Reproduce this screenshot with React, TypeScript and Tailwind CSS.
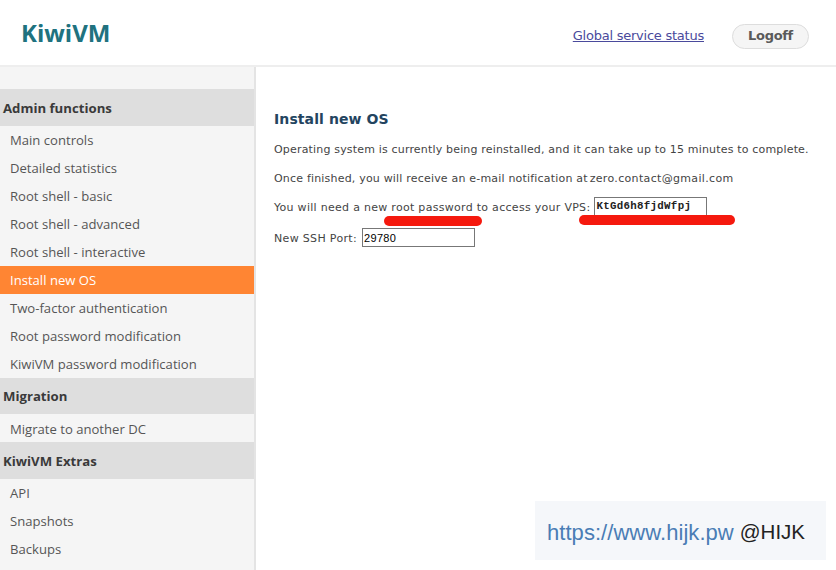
function Section({ title }: { title: string }) {
  return (
    <div className="h-[36.5px] flex items-center pl-[3px] pt-[3px] bg-[#dedede] text-[13.2px] font-bold text-[#3a3a3a] font-['Open_Sans',sans-serif]">
      {title}
    </div>
  );
}

function Item({ label, active }: { label: string; active?: boolean }) {
  return (
    <div
      className={
        "h-7 flex items-center pl-[10px] pt-[3px] text-[13.1px] font-['Open_Sans',sans-serif] " +
        (active ? "bg-[#ff8533] text-white" : "text-[#555555]")
      }
    >
      {label}
    </div>
  );
}

export default function App() {
  return (
    <div className="relative w-[836px] h-[570px] overflow-hidden bg-white">
      <header className="h-[67px] flex items-center justify-between border-b-2 border-[#eeeeee] pl-[21px] pr-[27px]">
        <div className="text-[24px] leading-none font-bold text-[#20727f] font-['Open_Sans',sans-serif]">
          KiwiVM
        </div>
        <div className="flex items-center gap-[28px] pt-[7px]">
          <a className="text-[13px] underline text-[#4a4a9c] font-['DejaVu_Sans',sans-serif] tracking-[-0.24px]">
            Global service status
          </a>
          <button className="w-[77px] h-[25px] rounded-full border border-[#dddddd] bg-[#f5f5f5] text-[13px] font-bold text-[#5a5a5a] font-['DejaVu_Sans',sans-serif] tracking-[-0.3px]">
            Logoff
          </button>
        </div>
      </header>
      <div className="flex h-[503px]">
        <aside className="w-[256px] shrink-0 bg-[#f5f5f5] border-r-2 border-[#e4e4e4] pt-[22px]">
          <Section title="Admin functions" />
          <Item label="Main controls" />
          <Item label="Detailed statistics" />
          <Item label="Root shell - basic" />
          <Item label="Root shell - advanced" />
          <Item label="Root shell - interactive" />
          <Item label="Install new OS" active />
          <Item label="Two-factor authentication" />
          <Item label="Root password modification" />
          <Item label="KiwiVM password modification" />
          <Section title="Migration" />
          <Item label="Migrate to another DC" />
          <Section title="KiwiVM Extras" />
          <Item label="API" />
          <Item label="Snapshots" />
          <Item label="Backups" />
        </aside>
        <main className="flex-1 pl-[18px] pt-[43px] text-[11px] text-[#444444] font-['DejaVu_Sans',sans-serif]">
          <h1 className="text-[14px] leading-[18px] font-bold text-[#23445f] tracking-[0.1px]">Install new OS</h1>
          <p className="mt-[14px] leading-[16px] tracking-[0.175px]">
            Operating system is currently being reinstalled, and it can take up to 15 minutes to complete.
          </p>
          <p className="mt-[13px] leading-[16px] tracking-[0.19px]">
            Once finished, you will receive an e-mail notification at
            <span className="ml-[2px] tracking-[0.33px]">zero.contact@gmail.com</span>
          </p>
          <div className="mt-[9px] flex items-center h-[20px] tracking-[0.29px]">
            <span className="pt-[4px]">You will need a new root password to access your VPS:</span>
            <input
              readOnly
              value="KtGd6h8fjdWfpj"
              className="ml-[4px] w-[113px] h-[19px] border border-[#777777] pl-[1px] pr-[2px] text-[10.8px] font-bold text-[#222222] font-['Liberation_Mono',monospace] outline-none"
            />
          </div>
          <div className="mt-[12px] flex items-center h-[19px] tracking-[0.33px]">
            <span className="pt-[4px]">New SSH Port:</span>
            <input
              readOnly
              value="29780"
              className="ml-[5px] w-[113px] h-[19px] border border-[#777777] px-[1px] text-[11px] text-black font-['Liberation_Sans',sans-serif] outline-none"
            />
          </div>
        </main>
      </div>
      <div className="absolute left-[384px] top-[216px] w-[98px] h-[10px] rounded-full bg-[#f5190e]" />
      <div className="absolute left-[579px] top-[215px] w-[156px] h-[10px] rounded-full bg-[#f5190e]" />
      <div className="absolute left-[535px] top-[501px] w-[291px] h-[59px] bg-[#f5f7fa] flex items-center pl-[12px] pt-[3px] font-['Liberation_Sans',sans-serif]">
        <span className="text-[22px] text-[#4a7db5] tracking-[0.05px]">https://www.hijk.pw</span>
        <span className="ml-[6px] text-[20.5px] text-[#222222]">@HIJK</span>
      </div>
    </div>
  );
}
